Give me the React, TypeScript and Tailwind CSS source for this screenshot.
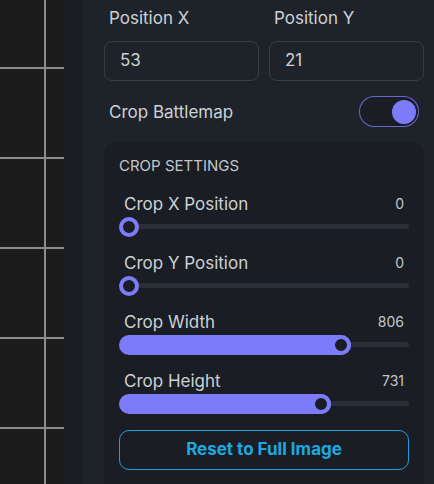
import React from "react";

const MAX = 1027;

function Slider({ label, value }: { label: string; value: number }) {
  const left = Math.round((value / MAX) * 270);
  return (
    <div className="flex flex-col">
      <div className="flex items-center justify-between px-[5px]">
        <span className="text-[17px] leading-6 text-[#cdd1d6]">{label}</span>
        <span className="text-sm leading-6 text-[#c3c7cc]">{value}</span>
      </div>
      <div className="relative mt-[1px] h-5 w-full">
        <div className="absolute left-0 right-0 top-[7px] h-[5px] rounded-full bg-[#2a2f37]" />
        {value > 0 && (
          <div
            className="absolute left-0 top-0 h-5 rounded-full bg-[#7c7cfa]"
            style={{ width: left + 20 }}
          />
        )}
        <div
          className="absolute top-0 h-5 w-5 rounded-full border-4 border-[#7c7cfa] bg-[#1a1d23]"
          style={{ left }}
        />
      </div>
    </div>
  );
}

export default function App() {
  const rows = [68, 158, 248, 338, 428];
  return (
    <div className="flex h-[484px] w-[434px] overflow-hidden font-['Inter',sans-serif]">
      {/* Canvas */}
      <div className="h-full w-[64px] bg-[#1c1c1c]">
        <svg width="64" height="484" viewBox="0 0 64 484">
          <line x1="45" y1="0" x2="45" y2="484" stroke="#8c8c8c" strokeWidth="2" />
          {rows.map((y) => (
            <line key={y} x1="0" y1={y} x2="64" y2={y} stroke="#8c8c8c" strokeWidth="2" />
          ))}
        </svg>
      </div>
      <div className="h-full w-[19px] bg-[#1a1e24]" />

      {/* Panel */}
      <div className="flex flex-1 flex-col bg-[#1e2229] pl-[21px] pr-[10px] pt-[6px]">
        <div className="grid grid-cols-2 gap-[10px]">
          {[
            ["Position X", "53"],
            ["Position Y", "21"],
          ].map(([l, v]) => (
            <div key={l} className="flex flex-col">
              <span className="pl-[5px] text-[17px] leading-6 text-[#cdd1d6]">{l}</span>
              <div className="mt-[11px] flex h-10 items-center rounded-lg border border-[#393e46] px-[15px] text-[17px] text-[#cdd1d6]">
                {v}
              </div>
            </div>
          ))}
        </div>

        <div className="mt-[15px] flex items-center justify-between pl-[5px] pr-[5px]">
          <span className="text-[17px] leading-6 text-[#cdd1d6]">Crop Battlemap</span>
          <div className="flex h-[31px] w-[60px] items-center justify-end rounded-full border border-[#7c7cfa]/80 bg-[#1a1d23] pr-[2px]">
            <div className="h-6 w-6 rounded-full bg-[#7c7cfa]" />
          </div>
        </div>

        <div className="mt-[15px] flex flex-1 flex-col rounded-t-[10px] bg-[#1a1d23] px-[15px] pt-[14px]">
          <span className="text-[15px] leading-5 uppercase text-[#c3c7cc]">Crop Settings</span>
          <div className="mt-[16px] flex flex-col gap-[14px]">
            <Slider label="Crop X Position" value={0} />
            <Slider label="Crop Y Position" value={0} />
            <Slider label="Crop Width" value={806} />
            <Slider label="Crop Height" value={731} />
          </div>
          <button className="mt-[16px] h-10 w-full rounded-[10px] border-[1.5px] border-[#1ea0d8] text-[17px] font-bold text-[#1ea8e2]">
            Reset to Full Image
          </button>
        </div>
      </div>
    </div>
  );
}
